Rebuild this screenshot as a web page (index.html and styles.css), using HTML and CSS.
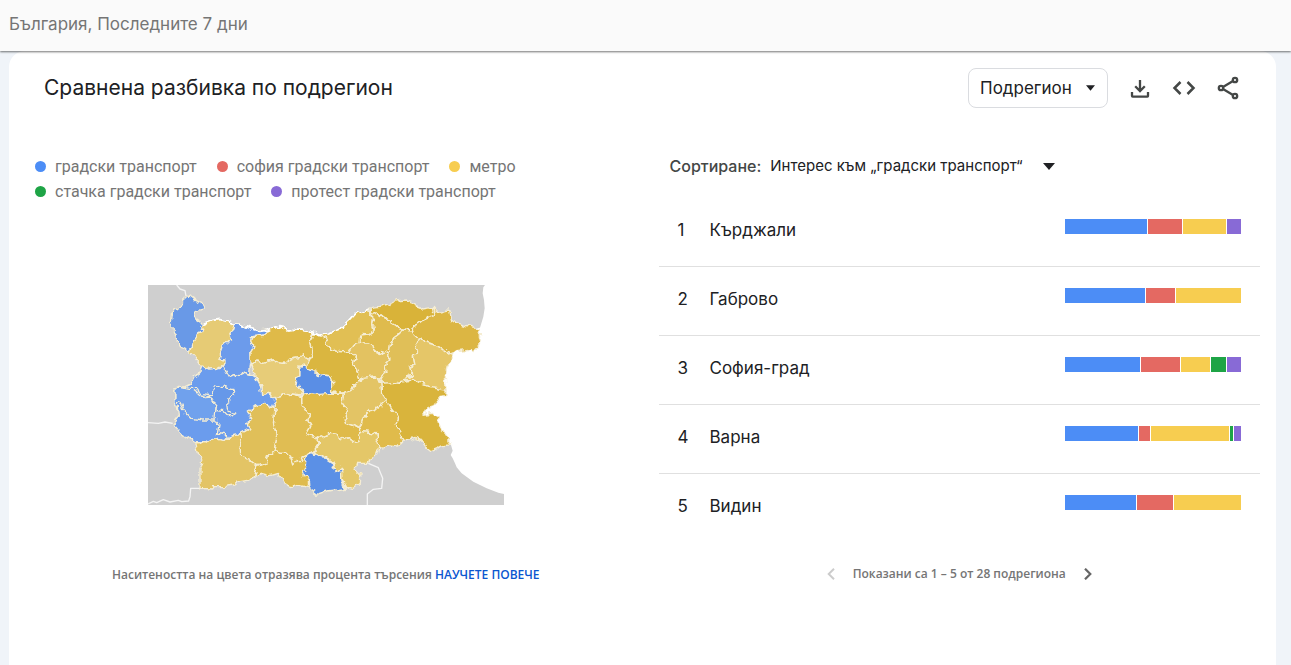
FILE: index.html
```html
<!DOCTYPE html>
<html lang="bg">
<head>
<meta charset="utf-8">
<meta name="viewport" content="width=device-width, initial-scale=1">
<title>Сравнена разбивка по подрегион</title>
<link rel="stylesheet" href="styles.css">
</head>
<body>
<header class="topbar">България, Последните 7 дни</header>
<main class="card">
  <div class="card-head">
    <h1 class="title">Сравнена разбивка по подрегион</h1>
    <div class="tools">
      <label class="picker picker-boxed">
        <select class="picker-select region-select" aria-label="Ниво на разбивка"><option>Подрегион</option></select>
        <svg class="caret" width="9" height="6" viewBox="0 0 10 6" aria-hidden="true"><path d="M0 0h10L5 6z"/></svg>
      </label>
      <button class="icon-btn" type="button" aria-label="Изтегляне">
        <svg width="20" height="20" viewBox="0 0 20 20" fill="none" stroke="currentColor" stroke-width="2.300"><path d="M10 2v11M5.200 8.200 10 13l4.800-4.800M2 14v4q0 .6.6.6h14.800q.6 0 .6-.6V14"/></svg>
      </button>
      <button class="icon-btn" type="button" aria-label="Вграждане">
        <svg width="24" height="20" viewBox="0 0 24 20" fill="none" stroke="currentColor" stroke-width="2.500"><path d="M8.500 4 2.500 10l6 6M15.500 4l6 6-6 6"/></svg>
      </button>
      <button class="icon-btn" type="button" aria-label="Споделяне">
        <svg width="22" height="24" viewBox="0 0 22 24" fill="none" stroke="currentColor" stroke-width="2.300"><circle cx="18" cy="4" r="2.200"/><circle cx="4" cy="12" r="2.200"/><circle cx="18" cy="20" r="2.200"/><path d="m6 11 10-6M6 13l10 6"/></svg>
      </button>
    </div>
  </div>
  <div class="columns">
    <section class="map-col">
      <ul class="legend">
        <li class="legend-item"><span class="dot blue"></span>градски транспорт</li>
        <li class="legend-item"><span class="dot red"></span>софия градски транспорт</li>
        <li class="legend-item"><span class="dot yellow"></span>метро</li>
        <li class="legend-item"><span class="dot green"></span>стачка градски транспорт</li>
        <li class="legend-item"><span class="dot purple"></span>протест градски транспорт</li>
      </ul>
      <svg class="map" width="356" height="220" viewBox="24 15 1068 660" role="img" aria-label="Карта на България">
        <defs>
          <filter id="rough" filterUnits="userSpaceOnUse" x="24" y="15" width="1068" height="660" color-interpolation-filters="sRGB">
            <feTurbulence type="fractalNoise" baseFrequency="0.05" numOctaves="2" seed="4"/>
            <feDisplacementMap in="SourceGraphic" scale="22" xChannelSelector="R" yChannelSelector="G"/>
          </filter>
        </defs>
        <path fill="#cfcfcf" d="M24 15H1035L1030 22 1028 40 1032 60 1034 85 1030 110 1020 143 800 200 800 430 933 495 938 512 932 525 938 535 945 550 950 562 965 580 1000 605 1040 625 1075 638 1092 642V675H24Z"/>
        <g class="frontier">
          <path d="M110 15 120 27 135 32 138 48M98 430 75 426 55 430 24 428M180 625H152L150 650 146 663 125 665 115 661 90 666 70 659 50 668 40 664 24 672M685 550 715 563 728 595 725 625 700 628 682 642V675"/>
        </g>
        <g class="regions" filter="url(#rough)">
          <path fill="#6999e7" d="M138 48 150 50 165 62 185 70 192 75 188 87 168 92 163 112 182 125 190 135 183 140 192 150 178 158 172 175 160 190 155 205 147 213 125 203 112 190V165L97 150 94 125 98 90 115 85 130 78 132 55Z"/>
          <path fill="#e6cb75" d="M190 130 215 122 240 118 265 124 282 135 279 150 270 160 275 180 250 195 243 215 237 238 252 240 250 255 230 268 205 270 190 262 172 248 162 230 147 213 155 205 160 190 172 175 178 158 192 150 183 140Z"/>
          <path fill="#6c9beb" d="M282 131 300 133 330 145 360 152 390 150 375 165 338 170 335 185 342 200 330 220 332 250 328 285 318 278 310 280 290 290 285 284 268 292 258 275 252 262V240L237 238 243 215 250 195 258 190 262 192 268 183 275 180 270 160 279 150Z"/>
          <path fill="#dfba49" d="M388 150 410 138 430 143 445 150 475 147 500 150 520 160 512 185 518 212 506 240 490 222 485 232 460 235 445 245 430 250 415 248 400 240 385 243 370 247 345 243 330 250V220L342 200 335 185 338 170 375 165Z"/>
          <path fill="#e7cc78" d="M330 250 345 243 370 247 400 240 415 248 430 250 460 235 485 232 490 222 506 240 498 262 480 258V285L470 290 467 305 482 325 488 345 455 342 420 348 400 350 385 340 365 345 362 320 345 290 342 265Z"/>
          <path fill="#dab640" d="M520 160 540 166 560 165 565 178 556 185 570 205 600 215 630 215 645 235 640 250 650 270 660 300 645 310 635 330 610 338 575 340 570 288 535 283 530 275 508 270 498 260 506 240 518 212 512 185Z"/>
          <path fill="#e1bf54" d="M540 166 565 160 600 148 612 137 630 120 650 98 685 85 690 100 700 112 698 135 703 155 685 165 667 163 662 187 645 190 640 205 630 215 600 215 585 213 570 205 556 185 565 178Z"/>
          <path fill="#d9b339" d="M690 83 720 79 745 72 765 63 800 60 825 68 830 80 850 87 880 82 883 97 875 110 855 118 840 130 820 140 812 155 795 150 785 155 770 135 750 122 720 110 705 100 692 98Z"/>
          <path fill="#dcb643" d="M883 82 895 97 925 90 932 122 970 135 1018 145 1018 170 1022 185 1015 200 1003 215 985 208 955 212 940 218 928 222 905 205 885 195 860 188 845 172 830 177 812 155 820 140 840 130 855 118 875 110 885 97Z"/>
          <path fill="#dfbb4d" d="M692 98 705 100 720 110 750 122 770 135 785 155 765 170 752 190 750 212 735 215 732 225 712 218 705 205 685 190 660 187 662 168 685 165 703 155 698 135 702 118Z"/>
          <path fill="#e3c261" d="M645 190 660 187 685 190 705 205 712 218 732 225 735 215 748 213 746 235 750 240 735 255 738 275 722 295 710 290 690 292 660 300 650 270 640 250 645 235 630 215Z"/>
          <path fill="#e0bf58" d="M785 155 795 150 812 155 830 172 845 178 825 190 828 205 835 213 820 230 825 255 810 262 812 275 820 285 795 293 800 303 770 307 735 310 722 302 738 275 735 255 750 240 746 220 752 190 765 170Z"/>
          <path fill="#e5c668" d="M845 172 860 188 885 195 905 205 928 222 942 218 930 245 921 260 916 290 918 327 890 325 860 318 840 310 820 298 800 303 795 293 820 285 812 275 810 262 825 255 820 230 835 213 828 205 825 190Z"/>
          <path fill="#d9b43c" d="M722 310 770 307 795 300 820 298 840 310 860 318 918 327V350L900 352 888 367 875 375 870 385 852 393 852 403 875 400 892 410 895 425 902 445 915 465 935 495 905 497 895 502 870 512 855 500 840 480 825 475 810 480 788 477 780 460 765 435 775 410 755 385 735 355 725 340Z"/>
          <path fill="#e3c465" d="M610 338 635 330 645 310 670 295 690 292 715 292 722 308 725 340 740 362 720 377 705 390 690 392 670 410 662 435 658 445 645 438 622 430 615 410 622 390 608 370 613 345Z"/>
          <path fill="#e0bb4b" d="M740 360 755 385 775 410 765 435 780 460 788 480 770 498 750 495 720 502 712 480V462L690 458 660 454 658 445 662 435 670 410 690 392 705 390Z"/>
          <path fill="#dfba49" d="M485 350 510 340H613L608 370 622 390 615 410 622 430 645 438 660 455 655 480 640 485 620 470 600 480 590 463 575 460 550 470 535 475 500 460 512 440 500 420 510 400 495 390 485 370Z"/>
          <path fill="#e4c768" d="M535 475 550 470 565 462 575 460 590 463 600 480 620 470 640 485 655 480 660 454 690 458 712 462V480L720 500 715 522 690 535 685 550 650 550 646 565 660 580 658 610 640 625 620 622 605 595V565L585 575 575 545 550 530 530 530 520 515 535 495Z"/>
          <path fill="#e0bd53" d="M400 350 420 348 455 342 485 350V370L495 390 510 400 500 420 512 440 500 460 535 475 533 495 520 515 510 520 490 530 485 545 460 555 445 520 420 520 402 515 410 470 400 430 405 385 395 380 405 375Z"/>
          <path fill="#dfbb4d" d="M402 515 420 520 445 520 455 552 462 552 485 542 490 530 510 520 520 550 510 568 508 620 485 615 455 620 430 605 415 580 390 588 370 582 345 588 350 560 365 550 380 548 385 530Z"/>
          <path fill="#e0bf59" d="M303 460 330 445 320 430 338 415 322 395 345 378 375 370 395 382 405 385 400 430 410 470 402 515 385 530 380 548 350 560 325 540 302 525 300 490 307 465Z"/>
          <path fill="#e3c465" d="M167 485 200 485 220 475 255 482 270 465 300 460 307 470 300 490 302 525 325 540 350 560 345 585 330 600 300 605 285 615 250 620 220 620 215 627 180 625V570L188 545 175 520Z"/>
          <path fill="#6b9ced" d="M185 255 205 270 230 268 252 262 258 275 268 292 285 284 290 290 310 280 328 285 345 290 362 320 365 345 385 340 402 352 405 370 400 382 385 375 375 370 345 378 322 395 338 415 320 430 330 445 303 460 270 465 255 482 220 475 200 485 170 485 148 477 125 463 98 430 118 405 115 380 105 365V345L105 325 135 320 155 310 160 292 180 278Z"/>
          <path fill="#70a1ed" d="M105 328 115 318 145 325 175 325 180 340 215 345 200 352 228 365 225 385 222 420 190 420 155 415 130 390 120 370 105 365Z"/>
          <path fill="#6698e9" d="M222 320 235 322 250 318 270 325 285 325 278 342 284 345 270 360 260 368 262 390 285 405 278 412 265 408 250 392 225 388 228 365 200 352 215 348Z"/>
          <path fill="none" d="M160 330 175 343 200 352M222 420 230 423 240 435 235 460 260 465 262 480"/>
          <path fill="#5a8ee5" d="M480 258 495 260 508 270 530 275 535 283 570 288 575 300V340L540 343 488 340 482 325 467 305 470 290 480 285Z"/>
          <path fill="#5b90e6" d="M510 520 525 525 540 533 560 535 575 545 585 575 603 565 605 595 610 615 622 625 590 630 560 633 530 643 510 628 508 595 490 590 488 575 500 568 493 550 500 525Z"/>
          <path class="danube" d="M190 131 215 122 240 118 265 124 282 132 300 133 330 145 360 154 388 150 410 138 430 143 445 150 475 147 500 150 520 160 540 166 565 160 600 148 630 120 650 98 685 85"/>
        </g>
      </svg>
      <p class="note">Наситеността на цвета отразява процента търсения <a class="note-link" href="#more">НАУЧЕТЕ ПОВЕЧЕ</a></p>
    </section>
    <section class="list-col">
      <div class="sort">
        <label class="sort-label" for="sort">Сортиране:</label>
        <div class="picker picker-plain">
          <select class="picker-select" id="sort"><option>Интерес към „градски транспорт“</option></select>
          <svg class="caret" width="12" height="7" viewBox="0 0 12 7" aria-hidden="true"><path d="M0 0h12L6 7z"/></svg>
        </div>
      </div>
      <table class="ranks">
        <tbody>
          <tr><td class="rank">1</td><td class="place">Кърджали</td><td class="share"><div class="bar"><span class="blue" style="flex-grow:82"></span><span class="red" style="flex-grow:34"></span><span class="yellow" style="flex-grow:43"></span><span class="purple" style="flex-grow:14"></span></div></td></tr>
          <tr><td class="rank">2</td><td class="place">Габрово</td><td class="share"><div class="bar"><span class="blue" style="flex-grow:80"></span><span class="red" style="flex-grow:29"></span><span class="yellow" style="flex-grow:65"></span></div></td></tr>
          <tr><td class="rank">3</td><td class="place">София-град</td><td class="share"><div class="bar"><span class="blue" style="flex-grow:75"></span><span class="red" style="flex-grow:39"></span><span class="yellow" style="flex-grow:29"></span><span class="green" style="flex-grow:15"></span><span class="purple" style="flex-grow:14"></span></div></td></tr>
          <tr><td class="rank">4</td><td class="place">Варна</td><td class="share"><div class="bar"><span class="blue" style="flex-grow:73"></span><span class="red" style="flex-grow:11"></span><span class="yellow" style="flex-grow:78"></span><span class="green" style="flex-grow:3"></span><span class="purple" style="flex-grow:7"></span></div></td></tr>
          <tr><td class="rank">5</td><td class="place">Видин</td><td class="share"><div class="bar"><span class="blue" style="flex-grow:71"></span><span class="red" style="flex-grow:36"></span><span class="yellow" style="flex-grow:67"></span></div></td></tr>
        </tbody>
      </table>
      <nav class="pager">
        <button class="page-btn" type="button" disabled aria-label="Назад"><svg width="8" height="12" viewBox="0 0 8 12" fill="none" stroke="currentColor" stroke-width="2"><path d="M7 .7 1.700 6 7 11.300"/></svg></button>
        <span>Показани са 1 – 5 от 28 подрегиона</span>
        <button class="page-btn" type="button" aria-label="Напред"><svg width="8" height="12" viewBox="0 0 8 12" fill="none" stroke="currentColor" stroke-width="2.200"><path d="M1 .7 6.300 6 1 11.300"/></svg></button>
      </nav>
    </section>
  </div>
</main>
</body>
</html>
```
FILE: styles.css
```css
* { box-sizing: border-box; }
body {
  margin: 0;
  min-height: 100vh;
  display: flex;
  flex-direction: column;
  background: #f0f4f9;
  color: #202124;
  font-family: Inter, "Noto Sans", sans-serif;
}
.topbar {
  position: relative;
  padding: 12px 9px 15px;
  background: #fafafa;
  box-shadow: 0 1px 2px rgba(0, 0, 0, .55);
  color: #757575;
  font-size: 17px;
  line-height: 24px;
}
.card {
  flex: 1;
  margin: 0 15px 0 9px;
  padding: 17px 16px 64px;
  background: #fff;
  border-radius: 16px 16px 0 0;
}
.card-head {
  display: flex;
  justify-content: space-between;
  align-items: center;
  padding: 0 20px 0 19px;
}
.title { margin: 0; font-weight: 400; font-size: 21px; line-height: 28px; }
.tools { display: flex; align-items: center; gap: 20px; }
.picker { display: flex; align-items: center; }
.picker-plain { gap: 20px; }
.picker-boxed {
  gap: 14px;
  height: 40px;
  padding: 0 12px 0 11px;
  border: 1px solid #dadce0;
  border-radius: 8px;
}
.picker-select {
  appearance: none;
  margin: 0;
  padding: 0;
  border: 0;
  background: none;
  color: inherit;
  font: 15px/24px Inter, sans-serif;
}
.region-select { font-size: 17px; }
.caret { fill: #202124; }
.icon-btn {
  display: grid;
  place-items: center;
  width: 24px;
  height: 24px;
  padding: 0;
  border: 0;
  background: none;
  color: #444746;
}
.columns { display: grid; grid-template-columns: 1fr 1fr; gap: 32px; padding-top: 46px; }
.map-col { display: flex; flex-direction: column; align-items: center; }
.legend {
  align-self: stretch;
  display: flex;
  flex-wrap: wrap;
  column-gap: 20px;
  max-width: 520px;
  margin: 0;
  padding: 0 10px;
  list-style: none;
  color: #757575;
  font: 16px/25px Roboto, sans-serif;
}
.legend-item { display: flex; align-items: center; gap: 9px; }
.dot { width: 11px; height: 11px; border-radius: 50%; }
.blue { background: #4c8df6; }
.red { background: #e46962; }
.yellow { background: #f7cd50; }
.green { background: #1ea446; }
.purple { background: #886ad6; }
.map { margin-top: 81px; max-width: 100%; }
.frontier, .regions { stroke-linejoin: round; }
.frontier { fill: none; stroke: #f4f4f4; stroke-width: 4; }
.regions { stroke: #f5edd3; stroke-width: 4; }
.danube { fill: none; stroke: #fff; stroke-width: 5; }
.note { margin: 60px 0 0; color: #757575; font: 600 12px/20px "Open Sans", sans-serif; }
.note-link { color: #0b57d0; text-decoration: none; }
.sort { display: flex; align-items: center; gap: 9px; padding: 0 11px; height: 24px; }
.sort-label { color: #444746; font-weight: 500; font-size: 16px; line-height: 24px; }
.ranks { width: 100%; margin-top: 19px; border-collapse: collapse; font-size: 17px; line-height: 24px; }
.ranks tr { height: 69px; border-bottom: 1px solid #e0e0e0; }
.ranks tr:last-child { border-bottom: 0; }
.ranks td { padding: 0 0 3px; }
.rank { width: 51px; }
.ranks .rank { padding-left: 19px; }
.share { width: 195px; }
.bar { display: flex; gap: 1px; height: 15px; margin: 0 19px 7px 0; }
.pager {
  display: flex;
  justify-content: center;
  align-items: center;
  gap: 14px;
  margin-top: 22px;
  color: #757575;
  font: 600 12px/20px "Open Sans", sans-serif;
}
.page-btn { display: grid; place-items: center; width: 16px; height: 20px; padding: 0; border: 0; background: none; color: #666; }
.page-btn:disabled { color: #ccc; }
```
